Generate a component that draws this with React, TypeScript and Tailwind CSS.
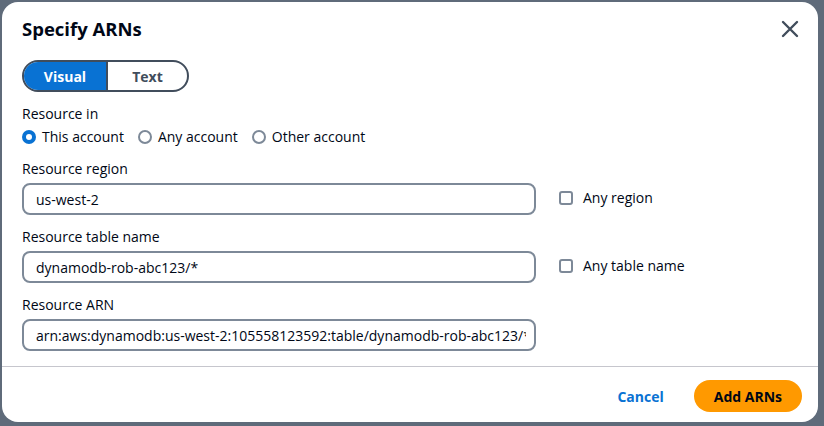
import React from "react";

const font = { fontFamily: '"Open Sans", "Noto Sans", Arial, sans-serif' };

function Radio({ checked, label }: { checked?: boolean; label: string }) {
  return (
    <div className="flex items-center gap-[6px]">
      {checked ? (
        <span className="w-[14px] h-[14px] rounded-full bg-[#0972d3] flex items-center justify-center">
          <span className="w-[6px] h-[6px] rounded-full bg-white" />
        </span>
      ) : (
        <span className="w-[14px] h-[14px] rounded-full border-2 border-[#7d8998] bg-white" />
      )}
      <span className="text-[14px] leading-[20px] text-[#000716]">{label}</span>
    </div>
  );
}

function Field({ label, value, check }: { label: string; value: string; check?: string }) {
  return (
    <div className="flex flex-col">
      <div className="text-[14px] leading-[20px] text-[#000716]">{label}</div>
      <div className="flex items-center mt-[4px]">
        <input
          readOnly
          value={value}
          className="w-[514px] h-[32px] rounded-[8px] border-2 border-[#7d8998] pl-[12px] pr-[8px] text-[14px] text-[#000716] outline-none bg-white"
          style={font}
        />
        {check && (
          <div className="flex items-center ml-[23px] gap-[10px] -mt-[3px]">
            <span className="w-[14px] h-[14px] rounded-[3px] border-2 border-[#7d8998] bg-white" />
            <span className="text-[14px] leading-[20px] text-[#000716]">{check}</span>
          </div>
        )}
      </div>
    </div>
  );
}

export default function App() {
  return (
    <div className="w-[824px] h-[426px] bg-[#5f6b7a] p-[2px] overflow-hidden" style={font}>
      <div className="w-[816px] h-[420px] bg-white rounded-[16px] flex flex-col">
        <div className="flex items-center justify-between pl-[20px] pr-[18px] pt-[15px]">
          <div className="text-[18.5px] leading-[24px] font-bold text-[#000716]">Specify ARNs</div>
          <svg width="20" height="20" viewBox="0 0 20 20">
            <path d="M3 3 L17 17 M17 3 L3 17" stroke="#414d5c" strokeWidth="2.4" strokeLinecap="round" />
          </svg>
        </div>
        <div className="px-[20px] flex flex-col">
          <div className="mt-[19px] flex w-[167px] h-[32px] rounded-full border-2 border-[#414d5c] overflow-hidden">
            <div className="w-[84px] bg-[#0972d3] text-white font-bold text-[14px] flex items-center justify-center border-r-2 border-[#414d5c]">
              Visual
            </div>
            <div className="flex-1 text-[#414d5c] font-bold text-[14px] flex items-center justify-center">Text</div>
          </div>
          <div className="mt-[12px] text-[14px] leading-[20px] text-[#000716]">Resource in</div>
          <div className="mt-[3px] flex items-center gap-[14px]">
            <Radio checked label="This account" />
            <Radio label="Any account" />
            <Radio label="Other account" />
          </div>
          <div className="mt-[12px] flex flex-col gap-[12px]">
            <Field label="Resource region" value="us-west-2" check="Any region" />
            <Field label="Resource table name" value="dynamodb-rob-abc123/*" check="Any table name" />
            <Field label="Resource ARN" value="arn:aws:dynamodb:us-west-2:105558123592:table/dynamodb-rob-abc123/*" />
          </div>
        </div>
        <div className="mt-[15px] border-t border-[#c6c6cd]" />
        <div className="flex items-center justify-end pr-[16px] pt-[13px] gap-[30px]">
          <span className="text-[14px] font-bold text-[#0972d3]">Cancel</span>
          <div className="h-[32px] px-[20px] rounded-full bg-[#ff9900] flex items-center text-[14px] font-bold text-[#000716]">
            Add ARNs
          </div>
        </div>
      </div>
    </div>
  );
}
